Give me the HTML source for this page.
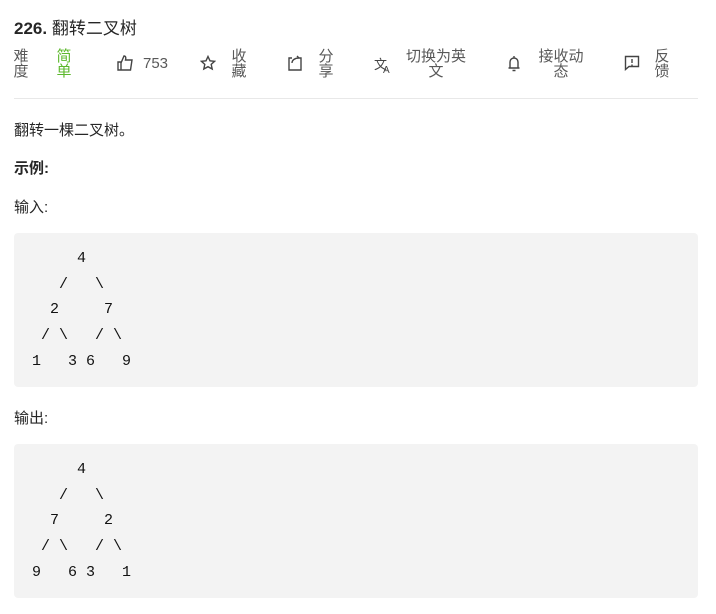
<!DOCTYPE html>
<html><head><meta charset="utf-8"><style>
body{margin:0;width:716px;height:614px;background:#fff;font-family:"Liberation Sans","Noto Sans CJK SC",sans-serif;color:#262626;position:relative;overflow:hidden}
.a{position:absolute;white-space:nowrap}
.t{font-size:15px;line-height:15px;color:#595959;text-align:center}
pre{position:absolute;left:14px;width:684px;margin:0;background:#f3f3f3;border-radius:4px;font-family:"Liberation Mono",monospace;font-size:15px;line-height:25.7px;padding:13px 0 0 18px;box-sizing:border-box;height:154px;color:#111}
svg{position:absolute}
</style></head><body>
<div class="a" style="left:14px;top:14px;font-size:17px;"><b>226.</b> 翻转二叉树</div>

<div class="a t" style="left:13px;top:49px;width:16px">难<br>度</div>
<div class="a t" style="left:56px;top:49px;width:16px;color:#5cb82c">简<br>单</div>
<svg style="left:117px;top:55px" width="17" height="16" viewBox="0 0 17 16" fill="none" stroke="#444" stroke-width="1.4"><path d="M1 7h3v8H1zM4 8l3-7c2 0 2 2 1.5 4H15l-1.5 10H4"/></svg>
<div class="a" style="left:143px;top:55px;font-size:15px;color:#595959">753</div>
<svg style="left:200px;top:55px" width="16" height="16" viewBox="0 0 16 16" fill="none" stroke="#444" stroke-width="1.4"><path d="M8 1.5l2 4.3 4.6.5-3.4 3.1 1 4.6L8 11.7 3.8 14l1-4.6L1.4 6.3 6 5.8z"/></svg>
<div class="a t" style="left:231px;top:49px;width:16px">收<br>藏</div>
<svg style="left:287px;top:55px" width="16" height="16" viewBox="0 0 16 16" fill="none" stroke="#444" stroke-width="1.4"><path d="M5 3H2v12h12V3h-3M5 8c0-3 3-5 7-5l-2-2"/></svg>
<div class="a t" style="left:318px;top:49px;width:16px">分<br>享</div>
<div class="a" style="left:374px;top:54px;font-size:13px;color:#444">文<span style="font-size:10px;margin-left:-4px;vertical-align:-4px">A</span></div>
<div class="a t" style="left:404px;top:49px;width:64px">切换为英<br>文</div>
<svg style="left:507px;top:55px" width="14" height="17" viewBox="0 0 14 17" fill="none" stroke="#444" stroke-width="1.4"><path d="M3 13V7a4 4 0 0 1 8 0v6M1.5 13h11M7 1v2M5.5 15.5h3"/></svg>
<div class="a t" style="left:536px;top:49px;width:50px">接收动<br>态</div>
<svg style="left:624px;top:55px" width="16" height="16" viewBox="0 0 16 16" fill="none" stroke="#444" stroke-width="1.4"><path d="M1.5 1.5h13v10H5l-3.5 3z"/><path d="M8 4v4M8 9.5v1.5"/></svg>
<div class="a t" style="left:654px;top:49px;width:16px">反<br>馈</div>

<div class="a" style="left:14px;top:98px;width:684px;height:1px;background:#e8e8e8"></div>

<div class="a" style="left:14px;top:119px;font-size:15px">翻转一棵二叉树。</div>
<div class="a" style="left:14px;top:157px;font-size:15px;font-weight:bold">示例:</div>
<div class="a" style="left:14px;top:196px;font-size:15px">输入:</div>
<pre style="top:233px">     4
   /   \
  2     7
 / \   / \
1   3 6   9</pre>
<div class="a" style="left:14px;top:407px;font-size:15px">输出:</div>
<pre style="top:444px">     4
   /   \
  7     2
 / \   / \
9   6 3   1</pre>
</body></html>
